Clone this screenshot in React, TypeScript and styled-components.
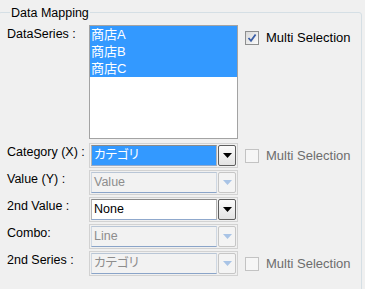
import React from "react";
import styled, { createGlobalStyle } from "styled-components";

const Global = createGlobalStyle`
  html, body { margin: 0; padding: 0; background: #f0f0f0; }
  body {
    width: 365px;
    height: 289px;
    overflow: hidden;
    font-family: "Liberation Sans", "Noto Sans CJK JP", sans-serif;
    color: #000;
  }
`;

const Group = styled.fieldset`
  box-sizing: border-box;
  margin: 3px 0 0 -2px;
  width: 364px;
  height: 300px;
  padding: 4px 0 0 8px;
  border: 1px solid #d5dfe5;
  border-radius: 3px;
  min-inline-size: 0;
`;

const Title = styled.legend`
  margin-left: 3px;
  padding: 3px 1px 0;
  font-size: 12.5px;
  line-height: 15px;
`;

const Form = styled.div`
  display: grid;
  grid-template-columns: 75px 149px auto;
  column-gap: 7px;
  row-gap: 2px;
  align-items: start;
`;

const Label = styled.div`
  font-size: 12.5px;
  line-height: 15px;
  padding-top: 2px;
  white-space: nowrap;
`;

const List = styled.div`
  box-sizing: border-box;
  height: 114px;
  margin-bottom: 2px;
  border: 1px solid #a3a3a3;
  background: #fff;
  padding: 0;
`;

const Item = styled.div<{ $selected?: boolean }>`
  height: 17px;
  line-height: 17px;
  padding-left: 1px;
  font-size: 13px;
  font-feature-settings: "palt";
  background: ${(p) => (p.$selected ? "#3399ff" : "transparent")};
  color: ${(p) => (p.$selected ? "#fff" : "#000")};
  white-space: nowrap;
`;

const Combo = styled.div`
  box-sizing: border-box;
  display: flex;
  gap: 1px;
  height: 25px;
  border: 1px solid #d2d2d2;
  padding: 1px;
`;

const Field = styled.div<{ $disabled?: boolean; $selected?: boolean }>`
  flex: 1;
  box-sizing: border-box;
  border: 1px solid;
  border-color: ${(p) =>
    p.$disabled
      ? "#b9c6d6 #cfd8e3 #8aa4c8 #cfd8e3"
      : "#8a8a8a #b5b5b5 #8fa8cc #b5b5b5"};
  padding: 0 2px;
  font-size: 12.5px;
  line-height: 19px;
  font-feature-settings: "palt";
  white-space: nowrap;
  overflow: hidden;
  background: ${(p) => (p.$selected ? "#3399ff" : p.$disabled ? "#f2f2f2" : "#fff")};
  color: ${(p) => (p.$selected ? "#fff" : p.$disabled ? "#8d8d8d" : "#000")};
`;

const DropButton = styled.div<{ $disabled?: boolean }>`
  box-sizing: border-box;
  width: 18px;
  display: flex;
  align-items: center;
  justify-content: center;
  border: 1px solid ${(p) => (p.$disabled ? "#c6c6c6" : "#5e5e5e")};
  border-radius: 2px;
  background: ${(p) =>
    p.$disabled ? "#f4f4f4" : "linear-gradient(#fbfbfb, #e3e3e3)"};
`;

const CheckCell = styled.div<{ $top?: boolean }>`
  display: flex;
  align-items: center;
  gap: 7px;
  height: ${(p) => (p.$top ? "13px" : "25px")};
  margin-top: ${(p) => (p.$top ? "6px" : "0")};
`;

const Box = styled.div<{ $disabled?: boolean }>`
  box-sizing: border-box;
  width: 14px;
  height: 14px;
  border: 1px solid ${(p) => (p.$disabled ? "#c3c3c3" : "#8e8f8f")};
  background: ${(p) =>
    p.$disabled ? "#f6f6f6" : "linear-gradient(135deg, #d9d9d9, #fbfbfb)"};
  display: flex;
  align-items: center;
  justify-content: center;
`;

const CheckText = styled.span<{ $disabled?: boolean }>`
  font-size: 13px;
  line-height: 15px;
  white-space: nowrap;
  color: ${(p) => (p.$disabled ? "#6d6d6d" : "#000")};
`;

const Arrow = ({ disabled }: { disabled?: boolean }) => (
  <svg width="9" height="5" viewBox="0 0 9 5">
    <polygon points="0,0 9,0 4.5,5" fill={disabled ? "#a9c4e6" : "#000"} />
  </svg>
);

const CheckMark = () => (
  <svg width="10" height="10" viewBox="0 0 10 10">
    <path d="M1.5 5 L4 7.8 L8.6 1.5" fill="none" stroke="#3b5ea6" strokeWidth="1.8" />
  </svg>
);

const Select = ({
  value,
  disabled,
  selected,
}: {
  value: string;
  disabled?: boolean;
  selected?: boolean;
}) => (
  <Combo>
    <Field $disabled={disabled} $selected={selected}>
      {value}
    </Field>
    <DropButton $disabled={disabled}>
      <Arrow disabled={disabled} />
    </DropButton>
  </Combo>
);

const Check = ({
  checked,
  disabled,
  top,
}: {
  checked?: boolean;
  disabled?: boolean;
  top?: boolean;
}) => (
  <CheckCell $top={top}>
    <Box $disabled={disabled}>{checked && <CheckMark />}</Box>
    <CheckText $disabled={disabled}>Multi Selection</CheckText>
  </CheckCell>
);

const Empty = styled.div``;

export default function App() {
  return (
    <>
      <Global />
      <Group>
        <Title>Data Mapping</Title>
        <Form>
          <Label>DataSeries :</Label>
          <List>
            <Item $selected>商店A</Item>
            <Item $selected>商店B</Item>
            <Item $selected>商店C</Item>
          </List>
          <Check checked top />

          <Label>Category (X) :</Label>
          <Select value="カテゴリ" selected />
          <Check disabled />

          <Label>Value (Y) :</Label>
          <Select value="Value" disabled />
          <Empty />

          <Label>2nd Value :</Label>
          <Select value="None" />
          <Empty />

          <Label>Combo:</Label>
          <Select value="Line" disabled />
          <Empty />

          <Label>2nd Series :</Label>
          <Select value="カテゴリ" disabled />
          <Check disabled />
        </Form>
      </Group>
    </>
  );
}
